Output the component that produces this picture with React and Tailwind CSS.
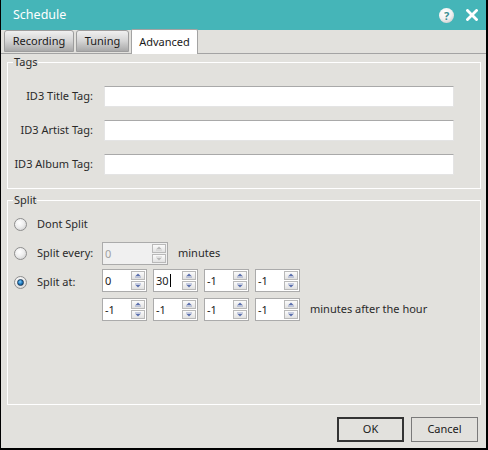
import { useState } from 'react';

const font = { fontFamily: '"Noto Sans", "Open Sans", sans-serif' };

const SpinBox = ({ value, width = 'w-[45px]', disabled = false, caret = false }) => (
  <div
    className={`${width} h-[23px] flex items-center border border-[#ababab] ${
      disabled ? 'bg-[#f0f0f0] text-[#a0a0a0]' : 'bg-white text-[#1a1a1a]'
    }`}
  >
    <div className="flex-1 pl-[2px] leading-none flex items-center">
      {value}
      {caret && <span className="inline-block w-px h-[13px] bg-black ml-px" />}
    </div>
    <div className="flex flex-col gap-px mr-px w-[14px]">
      <SpinButton up disabled={disabled} />
      <SpinButton disabled={disabled} />
    </div>
  </div>
);

const SpinButton = ({ up = false, disabled = false }) => {
  const c = disabled ? '#b8b8b8' : '#5a6fae';
  return (
    <div className="h-[9px] border border-[#b9b9b9] bg-gradient-to-b from-[#fbfbfb] to-[#e2e2e2] flex items-center justify-center">
      <svg width="8" height="5" viewBox="0 0 8 5">
        {up ? (
          <>
            <path d="M4 0.5 L6.5 3 L1.5 3 Z" fill={c} />
            <rect x="1" y="3.5" width="6" height="1" fill={c} opacity="0.6" />
          </>
        ) : (
          <>
            <rect x="1" y="0.5" width="6" height="1" fill={c} opacity="0.6" />
            <path d="M1.5 2 L6.5 2 L4 4.5 Z" fill={c} />
          </>
        )}
      </svg>
    </div>
  );
};

const Radio = ({ checked }) => (
  <div className="shrink-0 w-[13px] h-[13px] rounded-full border border-[#8e8e8e] bg-[radial-gradient(circle_at_40%_35%,#ffffff_0%,#eeeeee_45%,#c9c9c9_100%)] flex items-center justify-center">
    {checked && (
      <div className="w-[7px] h-[7px] rounded-full bg-[radial-gradient(circle_at_40%_35%,#7fd0ff_0%,#1f7ac0_50%,#0b3f6e_100%)] border border-[#1a3b5a]" />
    )}
  </div>
);

const Tab = ({ label, width, active }) =>
  active ? (
    <div className={`${width} h-[25px] mb-[-1px] bg-white border border-b-0 border-[#a3a3a3] rounded-t-[2px] flex items-center justify-center text-[#1a1a1a]`}>
      {label}
    </div>
  ) : (
    <div className={`${width} h-[22px] mb-px bg-gradient-to-b from-[#f0f0f0] via-[#d4d4d4] to-[#a9a9a9] border border-[#9d9d9d] rounded-t-[3px] flex items-center justify-center text-[#1a1a1a]`}>
      {label}
    </div>
  );

const TagRow = ({ label }) => (
  <>
    <label className="text-right whitespace-nowrap text-[#2a2a2a] self-center">{label}</label>
    <input className="h-[21px] w-[350px] bg-white border border-[#e4e4e4] border-t-[#a9a9a9] outline-none" />
  </>
);

export default function App() {
  const [mode, setMode] = useState('at');

  return (
    <div
      style={font}
      className="w-[488px] h-[450px] flex flex-col bg-[#e2e1dd] border-l border-r-2 border-b-2 border-black overflow-hidden text-[11px] whitespace-nowrap"
    >
      {/* Title bar */}
      <div className="h-[30px] shrink-0 bg-[#45b5b8] flex items-center pl-[12px] pr-[8px]">
        <span className="text-white text-[12.5px] flex-1">Schedule</span>
        <div className="w-[15px] h-[15px] rounded-full bg-[radial-gradient(circle_at_40%_30%,#ffffff_0%,#f0f0f0_50%,#bdbdbd_100%)] flex items-center justify-center text-[11px] font-bold text-[#3a8f92] leading-none mr-[12px]">
          ?
        </div>
        <svg width="12" height="12" viewBox="0 0 12 12">
          <path d="M1.5 1.5 L10.5 10.5 M10.5 1.5 L1.5 10.5" stroke="white" strokeWidth="2.8" strokeLinecap="square" />
        </svg>
      </div>

      {/* Tabs */}
      <div className="h-[24px] shrink-0 flex items-end gap-[2px] pl-[3px] border-b border-[#a3a3a3]">
        <Tab label="Recording" width="w-[70px]" />
        <Tab label="Tuning" width="w-[53px]" />
        <Tab label="Advanced" width="w-[67px]" active />
      </div>

      <div className="flex-1 flex flex-col pl-[6px] pr-[5px]">
        {/* Tags */}
        <fieldset className="mt-px border border-white pb-[13px]">
          <legend className="ml-[5px] px-px leading-[14px] text-[#2a2a2a]">Tags</legend>
          <div className="grid grid-cols-[85px_350px] gap-x-[11px] gap-y-[13px] mt-[17px]">
            <TagRow label="ID3 Title Tag:" />
            <TagRow label="ID3 Artist Tag:" />
            <TagRow label="ID3 Album Tag:" />
          </div>
        </fieldset>

        {/* Split */}
        <fieldset className="mt-[4px] flex-1 border border-white">
          <legend className="ml-[5px] px-px leading-[14px] text-[#2a2a2a]">Split</legend>
          <div className="flex flex-col mt-[6px] text-[#2a2a2a]">
            <div className="h-[22px] flex items-center pl-[6px] gap-[10px]" onClick={() => setMode('none')}>
              <Radio checked={mode === 'none'} />
              <span>Dont Split</span>
            </div>

            <div className="h-[22px] flex items-center mt-[7px]">
              <div className="w-[94px] flex items-center pl-[6px] gap-[10px]" onClick={() => setMode('every')}>
                <Radio checked={mode === 'every'} />
                <span>Split every:</span>
              </div>
              <SpinBox value="0" width="w-[66px]" disabled />
              <span className="ml-[10px]">minutes</span>
            </div>

            <div className="flex mt-[5px]">
              <div className="w-[94px] h-[23px] flex items-center pl-[6px] gap-[10px] pt-[3px]" onClick={() => setMode('at')}>
                <Radio checked={mode === 'at'} />
                <span>Split at:</span>
              </div>
              <div className="flex flex-col gap-[6px]">
                <div className="flex gap-[6px]">
                  <SpinBox value="0" />
                  <SpinBox value="30" caret />
                  <SpinBox value="-1" />
                  <SpinBox value="-1" />
                </div>
                <div className="flex items-center gap-[6px]">
                  <SpinBox value="-1" />
                  <SpinBox value="-1" />
                  <SpinBox value="-1" />
                  <SpinBox value="-1" />
                  <span className="ml-[4px]">minutes after the hour</span>
                </div>
              </div>
            </div>
          </div>
        </fieldset>

        {/* Buttons */}
        <div className="flex justify-end gap-[7px] pr-[3px] mt-[12px] mb-[6px]">
          <button className="w-[67px] h-[25px] border-2 border-[#333333] text-[#1a1a1a]">OK</button>
          <button className="w-[67px] h-[25px] border border-[#7a7a7a] text-[#1a1a1a]">Cancel</button>
        </div>
      </div>
    </div>
  );
}
